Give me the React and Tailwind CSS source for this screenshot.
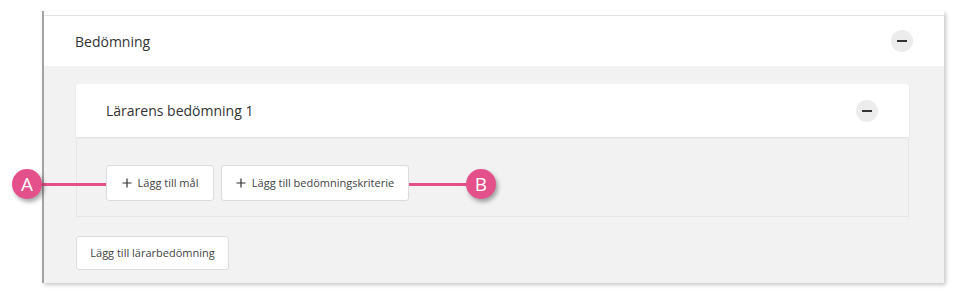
import React from 'react';

const font = { fontFamily: '"Open Sans", "Noto Sans", sans-serif' };

const MinusButton = () => (
    <button className="w-[22px] h-[22px] rounded-full bg-[#ececec] flex items-center justify-center">
        <span className="block w-[10px] h-[2px] bg-[#333]" />
    </button>
);

const Plus = () => (
    <svg width="10" height="10" viewBox="0 0 10 10" className="mr-[6px]">
        <path d="M5 0.5V9.5M0.5 5H9.5" stroke="#333" strokeWidth="1.2" fill="none" />
    </svg>
);

const Callout = ({ letter, className }) => (
    <div
        className={`absolute w-[30px] h-[30px] rounded-full bg-[#e4508a] text-white text-[19px] flex items-center justify-center shadow-[2px_3px_4px_rgba(0,0,0,0.35)] ${className}`}
    >
        {letter}
    </div>
);

const App = () => {
    return (
        <div className="relative w-[963px] h-[301px] bg-white overflow-hidden" style={font}>
            <div className="ml-[42px] mt-[11px] w-[902px] bg-white border-l-2 border-[#a3a3a3] shadow-[2px_2px_4px_rgba(0,0,0,0.22)]">
                <div className="h-[5px] bg-white border-b border-[#e2e2ea]" />
                {/* header */}
                <div className="h-[50px] flex items-center justify-between pl-[31px] pr-[31px] bg-white">
                    <span className="text-[14px] text-[#333]">Bedömning</span>
                    <MinusButton />
                </div>
                {/* body */}
                <div className="bg-[#f2f2f2] pt-[18px] pl-[32px] pr-[35px] pb-[13px]">
                    <div className="bg-white rounded-t-[3px] h-[53px] flex items-center justify-between pl-[30px] pr-[31px] shadow-[0_1px_2px_rgba(0,0,0,0.08)]">
                        <span className="text-[14px] text-[#333]">Lärarens bedömning 1</span>
                        <MinusButton />
                    </div>
                    <div className="border border-t-0 border-[#e6e6e6] pl-[29px] pt-[28px] pb-[15px] flex gap-[7px]">
                        <button className="h-[36px] w-[108px] bg-white border border-[#dcdcdc] rounded-[3px] flex items-center justify-center text-[11px] text-[#444]">
                            <Plus />
                            Lägg till mål
                        </button>
                        <button className="h-[36px] w-[188px] bg-white border border-[#dcdcdc] rounded-[3px] flex items-center justify-center text-[11px] text-[#444]">
                            <Plus />
                            Lägg till bedömningskriterie
                        </button>
                    </div>
                    <button className="mt-[19px] h-[34px] w-[153px] bg-white border border-[#dcdcdc] rounded-[3px] flex items-center justify-center text-[11px] text-[#444]">
                        Lägg till lärarbedömning
                    </button>
                </div>
            </div>

            {/* annotations */}
            <div className="absolute left-[30px] top-[183px] w-[76px] h-[3px] bg-[#e4508a]" />
            <Callout letter="A" className="left-[12px] top-[169px]" />
            <div className="absolute left-[409px] top-[183px] w-[62px] h-[3px] bg-[#e4508a]" />
            <Callout letter="B" className="left-[466px] top-[169px]" />
        </div>
    );
};

export default App;
